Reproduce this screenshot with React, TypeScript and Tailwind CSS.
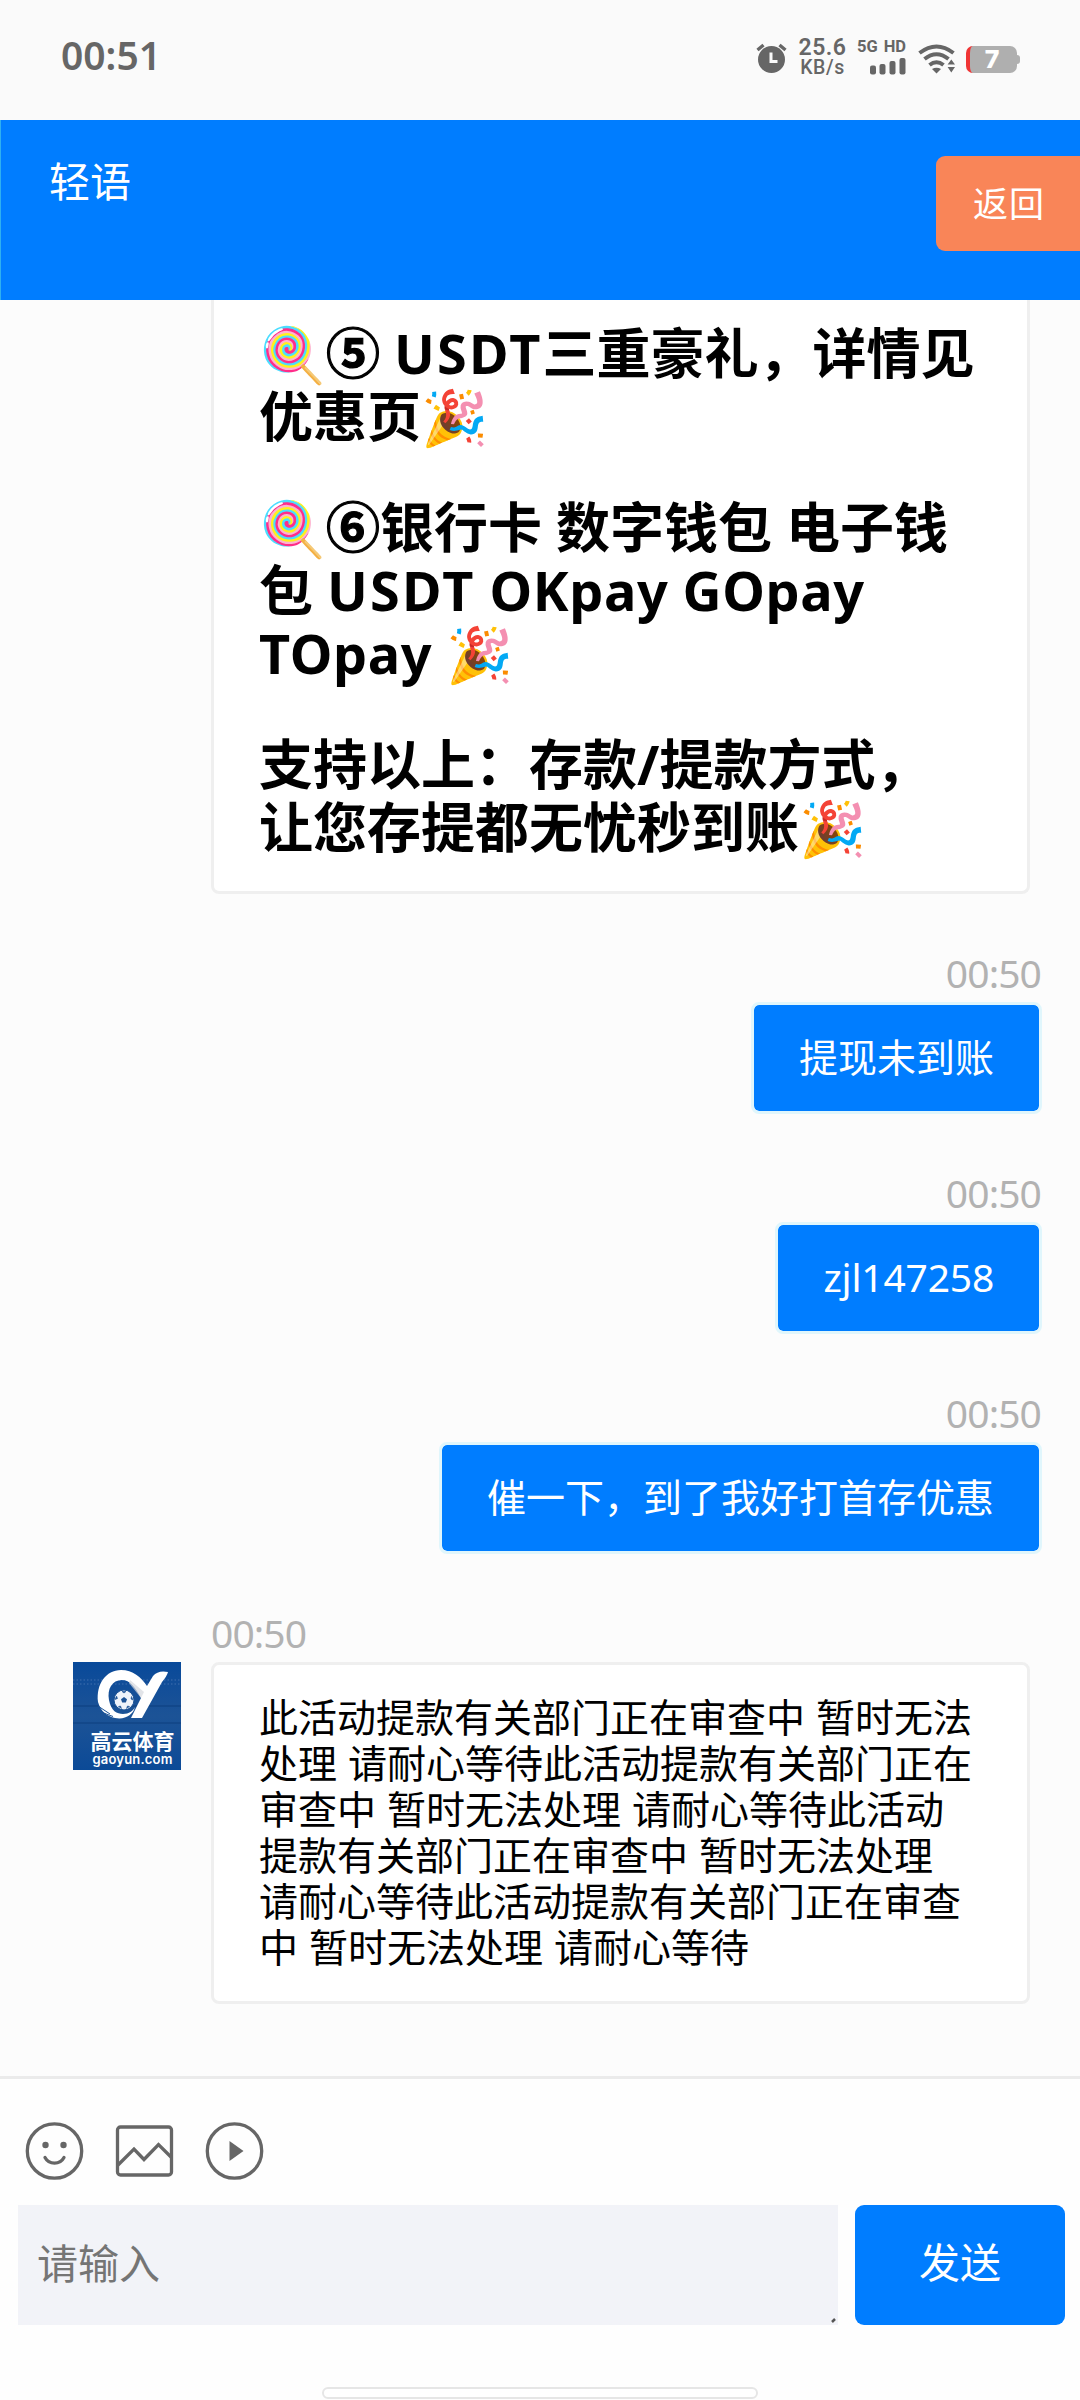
import React from 'react';

interface ChatMessage {
    id: number;
    time: string;
    text: string;
}

const sentMessages: ChatMessage[] = [
    { id: 1, time: '00:50', text: '提现未到账' },
    { id: 2, time: '00:50', text: 'zjl147258' },
    { id: 3, time: '00:50', text: '催一下，到了我好打首存优惠' },
];

const promoBlocks: string[][] = [
    ['🍭⑤ USDT三重豪礼，详情见', '优惠页🎉'],
    ['🍭⑥银行卡 数字钱包 电子钱', '包 USDT OKpay GOpay', 'TOpay 🎉'],
    ['支持以上：存款/提款方式，', '让您存提都无忧秒到账🎉'],
];

const replyLines: string[] = [
    '此活动提款有关部门正在审查中 暂时无法',
    '处理 请耐心等待此活动提款有关部门正在',
    '审查中 暂时无法处理 请耐心等待此活动',
    '提款有关部门正在审查中 暂时无法处理',
    '请耐心等待此活动提款有关部门正在审查',
    '中 暂时无法处理 请耐心等待',
];

const AlarmIcon: React.FC = () => (
    <svg width="32" height="32" viewBox="0 0 32 32" fill="#666">
        <circle cx="15.5" cy="17.5" r="13.5" />
        <path d="M1.5 8 L7.5 3 M23.5 3 L29.5 8" stroke="#666" strokeWidth="3.4" />
        <path d="M15 10.5 V19.5 H21.5" stroke="#fafafa" strokeWidth="3" fill="none" />
    </svg>
);

const SignalIcon: React.FC = () => (
    <svg width="36" height="17" viewBox="0 0 36 17" fill="#666">
        <rect x="0" y="7.5" width="6" height="9" rx="2" />
        <rect x="9.5" y="6" width="6" height="10.5" rx="2" />
        <rect x="19.5" y="3" width="6" height="13.5" rx="2" />
        <rect x="29.5" y="0" width="6" height="16.5" rx="2" />
    </svg>
);

const WifiIcon: React.FC = () => (
    <svg width="38" height="30" viewBox="0 0 38 30" fill="none">
        <g stroke="#666" strokeWidth="4">
            <path d="M1.5 9 Q18.5 -4 35.5 9" />
            <path d="M6.5 15 Q18.5 5.5 30.5 15" />
            <path d="M11.5 21 Q18.5 15.5 25.5 21" />
        </g>
        <path d="M14 25 Q18.5 22.5 23 25 L18.5 29.5 Z" fill="#666" />
        <path d="M33 14 L38.5 22.5 H27 Z" fill="#fafafa" />
        <path d="M33.3 15.5 L37 20.5 H29.6 Z M29.6 23 H37 L33.3 28.5 Z" fill="#666" />
    </svg>
);

const BatteryIcon: React.FC = () => (
    <div className="flex h-[27px] items-center">
        <div className="flex h-[27px] w-[51px] items-center justify-center rounded-[7px] border-l-4 border-[#f03535] bg-[#afafaf] pr-[3px] font-[Inter,sans-serif] text-[25px] leading-[27px] font-extrabold text-white">
            7
        </div>
        <div className="h-[9px] w-[3px] rounded-r-sm bg-[#afafaf]" />
    </div>
);

const StatusBar: React.FC = () => (
    <div className="flex h-[120px] justify-between bg-[#fafafa] pr-[60px] pl-[61px] text-[#666]">
        <span className="mt-[31px] text-[39px] leading-[48px] font-semibold">00:51</span>
        <div className="mt-[36px] flex h-[40px] items-start font-[Roboto,sans-serif]">
            <div className="mt-[6px] mr-[11px]">
                <AlarmIcon />
            </div>
            <div className="mr-[11px] flex w-[47px] flex-col items-center whitespace-nowrap">
                <span className="text-[23px] leading-[23px] font-semibold tracking-[0.5px]">25.6</span>
                <span className="-mt-px text-[19.5px] leading-[19px] font-medium tracking-[0.6px]">KB/s</span>
            </div>
            <div className="mr-[12px] flex w-[49px] flex-col items-end">
                <span className="flex h-[22px] w-full justify-between text-[16.5px] leading-[22px] font-bold">
                    <span>5G</span>
                    <span>HD</span>
                </span>
                <SignalIcon />
            </div>
            <div className="mt-[8px] mr-[10px]">
                <WifiIcon />
            </div>
            <div className="mt-[10px]">
                <BatteryIcon />
            </div>
        </div>
    </div>
);

const Header: React.FC = () => (
    <div className="flex h-[180px] items-start justify-between border-l border-[#2fb0f0] bg-[#007dff] text-white">
        <h1 className="mt-[36px] pl-[48px] text-[41px] leading-[50px]">轻语</h1>
        <button className="mt-[36px] h-[95px] w-[144px] rounded-l-[9px] bg-[#f98558] pl-[37px] text-left text-[35px] leading-[93px] tracking-[1px]">
            返回
        </button>
    </div>
);

const Avatar: React.FC = () => (
    <div className="relative h-[108px] w-[108px] shrink-0 bg-linear-to-b from-[#07499a] via-[#1c5396] to-[#0b4a97]">
        <svg width="108" height="108" viewBox="0 0 108 108" fill="none">
            <path d="M0 18 H108 M0 22 H108" stroke="#4b79b5" strokeWidth="2" strokeDasharray="1.5 2" opacity="0.4" />
            <path d="M0 44 H108 M0 61 H108" stroke="#0c3e7e" strokeWidth="2" opacity="0.5" />
            <path
                d="M25 40 C23 22 33 8 48 8 C60 8 68 15 74 24 L80 14 Q85 8 95 10 Q94 14 89 20 L69 56 H58 L68 36 C62 25 57 18 49 18 C39 18 34 27 36 38 C38 49 44 52 50 52 C56 52 60 49 62 45 C60 53 52 58 42 56 C34 54 28 50 25 40 Z"
                fill="#fff"
            />
            <path d="M25 44 L37 52 M28 50 L40 54.5" stroke="#1c5396" strokeWidth="1" />
            <path d="M57 18 L71 30 L68 36 L56 21 Z" fill="#d5d8de" opacity="0.7" />
            <circle cx="51" cy="38" r="10" fill="#eef3fa" stroke="#1c5396" />
            <path d="M51 35 L54 37.2 L52.8 40.5 H49.2 L48 37.2 Z" fill="#1c5396" />
            <path
                d="M49 29.5 H53 L51 31 Z M58.5 34.5 L60 38 L58 37 Z M56.5 44.5 L53.5 46.5 L54.5 44 Z M45.5 44.5 L48.5 46.5 L47.5 44 Z M42 37.5 L43.5 34 L44.5 36.5 Z"
                fill="#1c5396"
                stroke="#1c5396"
                strokeWidth="0.6"
            />
        </svg>
        <div className="absolute inset-x-0 top-[66px] flex flex-col items-center pl-[11px] whitespace-nowrap text-white">
            <span className="text-[21px] leading-[26px] font-bold">高云体育</span>
            <span className="-mt-[2px] font-[Inter,sans-serif] text-[13px] leading-[14px] font-semibold tracking-[0.2px]">
                gaoyun.com
            </span>
        </div>
    </div>
);

// Latin words and circled numbers are set slightly differently from the CJK text around them
const PromoLine: React.FC<{ line: string }> = ({ line }) => (
    <p className="h-[63px]">
        {line.split(/(USDT|[A-Z]+pay|[⑤⑥])/).map((part, i) => {
            if (part === 'USDT') {
                return (
                    <span key={i} className="tracking-[2.2px]">
                        {part}
                    </span>
                );
            }
            if (part.endsWith('pay')) {
                return (
                    <span key={i} className="tracking-[0.6px]">
                        {part}
                    </span>
                );
            }
            if (part === '⑤' || part === '⑥') {
                return (
                    <span key={i} className="[-webkit-text-stroke:1.2px_black]">
                        {part}
                    </span>
                );
            }
            return part;
        })}
    </p>
);

const PromoCard: React.FC = () => (
    <div className="ml-[211px] flex w-[819px] flex-col gap-[48px] rounded-b-[8px] border-x-3 border-b-3 border-[#efefef] bg-white px-[45px] pt-[22px] pb-[32px] text-[54px] leading-[63px] font-bold whitespace-nowrap text-black">
        {promoBlocks.map((lines, i) => (
            <div key={i}>
                {lines.map((line) => (
                    <PromoLine key={line} line={line} />
                ))}
            </div>
        ))}
    </div>
);

const SentBubble: React.FC<{ message: ChatMessage }> = ({ message }) => (
    <div className="mt-[56px] flex flex-col items-end gap-[6px] pr-[38px] text-[39px] leading-[46px]">
        <span className="h-[46px] pr-px tracking-[-0.9px] text-[#b2b2b2]">{message.time}</span>
        <div className="h-[112px] rounded-[8px] border-3 border-[#e0f6fc] bg-[#007dff] bg-clip-padding px-[45px] pt-[29px] whitespace-nowrap text-white">
            {/^\w+$/.test(message.text) ? <span className="tracking-[-0.2px]">{message.text}</span> : message.text}
        </div>
    </div>
);

const ReplyMessage: React.FC = () => (
    <div className="mt-[56px] flex flex-col gap-[6px] text-[39px] leading-[46px]">
        <span className="ml-[211px] h-[46px] tracking-[-0.9px] text-[#b2b2b2]">00:50</span>
        <div className="ml-[73px] flex items-start gap-[30px]">
            <Avatar />
            <div className="w-[819px] rounded-[8px] border-3 border-[#efefef] bg-white px-[45px] pt-[29px] pb-[31px] whitespace-nowrap text-black">
                {replyLines.map((line) => (
                    <p key={line} className="h-[46px] [word-spacing:0.8px]">
                        {line}
                    </p>
                ))}
            </div>
        </div>
    </div>
);

const Composer: React.FC = () => (
    <div className="flex h-[324px] flex-col border-t-3 border-[#ebebeb] bg-[#fefefe]">
        <div className="mt-[42px] ml-[24px] flex gap-[30px] text-[#666]">
            <svg width="60" height="60" viewBox="0 0 60 60" fill="none" stroke="currentColor" strokeWidth="3.3">
                <circle cx="30.5" cy="30" r="27.2" />
                <circle cx="21.5" cy="24" r="3.2" fill="currentColor" stroke="none" />
                <circle cx="39.5" cy="24" r="3.2" fill="currentColor" stroke="none" />
                <path d="M21 36.5 C25 44 36 44 40 36.5" strokeLinecap="round" />
            </svg>
            <svg width="60" height="60" viewBox="0 0 60 60" fill="none" stroke="currentColor" strokeWidth="3.3">
                <rect x="3.5" y="6" width="54" height="48" rx="3" />
                <path d="M4 44 L20 28 L30 38.5 L44.5 23.5 L57 36" />
            </svg>
            <svg width="60" height="60" viewBox="0 0 60 60" fill="none" stroke="currentColor" strokeWidth="3.3">
                <circle cx="30.5" cy="30" r="27.2" />
                <path d="M25.5 20 L39.5 30 L25.5 40 Z" fill="currentColor" stroke="none" />
            </svg>
        </div>
        <div className="mt-[24px] flex gap-[17px] pl-[18px]">
            <div className="relative h-[120px] w-[820px] bg-[#f2f3f8] pt-[33px] pl-[19px] text-[41px] leading-[50px] text-[#757575]">
                请输入
                <svg className="absolute right-[2px] bottom-[2px]" width="5" height="5" viewBox="0 0 5 5">
                    <path d="M1 4 L4 1" stroke="#555" strokeWidth="2.5" />
                </svg>
            </div>
            <button className="h-[120px] w-[210px] rounded-[9px] bg-[#007dff] pb-[4px] text-[41px] text-white">发送</button>
        </div>
        <div className="mt-[62px] ml-[322px] h-[12px] w-[436px] rounded-full border-2 border-[#e6e6e6] bg-white" />
    </div>
);

const App: React.FC = () => {
    return (
        <div className="flex h-[2400px] w-[1080px] flex-col overflow-hidden bg-[#fcfcfc] font-['Noto_Sans','Noto_Sans_CJK_SC',sans-serif]">
            <StatusBar />
            <Header />
            <main className="flex-1 overflow-hidden">
                <PromoCard />
                {sentMessages.map((message) => (
                    <SentBubble key={message.id} message={message} />
                ))}
                <ReplyMessage />
            </main>
            <Composer />
        </div>
    );
};

export default App;
